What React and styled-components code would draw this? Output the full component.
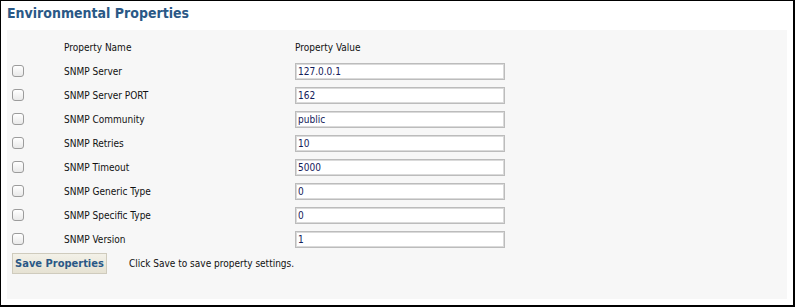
import React from 'react';
import styled, { createGlobalStyle } from 'styled-components';

const GlobalStyle = createGlobalStyle`
  html, body {
    margin: 0;
    padding: 0;
    background: #ffffff;
  }
  body {
    font-family: "DejaVu Sans Condensed", "DejaVu Sans", Tahoma, sans-serif;
    font-stretch: condensed;
  }
`;

const Frame = styled.div`
  width: 795px;
  height: 307px;
  box-sizing: border-box;
  border-style: solid;
  border-color: #000;
  border-width: 1px 2px 2px 1px;
  padding: 3px 6px 0 6px;
  background: #fff;
`;

const Title = styled.h2`
  margin: 0;
  height: 26px;
  font-size: 14px;
  line-height: 18px;
  font-weight: bold;
  color: #2a5886;
`;

const Panel = styled.div`
  background: #f7f7f7;
  height: 269px;
  box-sizing: border-box;
  padding: 5px 0 0 5px;
`;

const Grid = styled.div`
  display: grid;
  grid-template-columns: 52px 231px 210px;
  grid-auto-rows: 24px;
  align-items: center;
`;

const HeadCell = styled.div`
  font-size: 10px;
  color: #111;
`;

const NameCell = styled.div`
  font-size: 10px;
  color: #111;
`;

const Check = styled.input.attrs({ type: 'checkbox' })`
  appearance: none;
  margin: 0;
  width: 12px;
  height: 12px;
  box-sizing: border-box;
  border: 1px solid #9c9c9c;
  border-radius: 3px;
  background: linear-gradient(#ffffff, #e9e9e9);
`;

const ValueInput = styled.input.attrs({ type: 'text', readOnly: true })`
  width: 210px;
  height: 17px;
  box-sizing: border-box;
  margin: 0;
  padding: 0 2px;
  border: 1px solid #bcbcbc;
  box-shadow: inset 0 0 0 1px #dadada;
  background: #fff;
  font-family: inherit;
  font-stretch: condensed;
  font-size: 10px;
  color: #13205a;
  outline: none;
`;

const Actions = styled.div`
  display: flex;
  align-items: center;
  gap: 22px;
  margin-top: 2px;
`;

const SaveButton = styled.button`
  width: 95px;
  height: 21px;
  margin: 0;
  padding: 0;
  box-sizing: border-box;
  border: 1px solid #cfcbbd;
  background: linear-gradient(#f3f1e8, #e6e2d3);
  font-family: inherit;
  font-stretch: condensed;
  font-size: 11px;
  font-weight: bold;
  color: #2a5886;
`;

const Hint = styled.span`
  font-size: 10px;
  color: #111;
`;

const properties = [
  { name: 'SNMP Server', value: '127.0.0.1' },
  { name: 'SNMP Server PORT', value: '162' },
  { name: 'SNMP Community', value: 'public' },
  { name: 'SNMP Retries', value: '10' },
  { name: 'SNMP Timeout', value: '5000' },
  { name: 'SNMP Generic Type', value: '0' },
  { name: 'SNMP Specific Type', value: '0' },
  { name: 'SNMP Version', value: '1' },
];

function App() {
  return (
    <>
      <GlobalStyle />
      <Frame>
        <Title>Environmental Properties</Title>
        <Panel>
          <Grid>
            <div />
            <HeadCell>Property Name</HeadCell>
            <HeadCell>Property Value</HeadCell>
            {properties.map((p) => (
              <React.Fragment key={p.name}>
                <Check />
                <NameCell>{p.name}</NameCell>
                <ValueInput value={p.value} />
              </React.Fragment>
            ))}
          </Grid>
          <Actions>
            <SaveButton>Save Properties</SaveButton>
            <Hint>Click Save to save property settings.</Hint>
          </Actions>
        </Panel>
      </Frame>
    </>
  );
}

export default App;
